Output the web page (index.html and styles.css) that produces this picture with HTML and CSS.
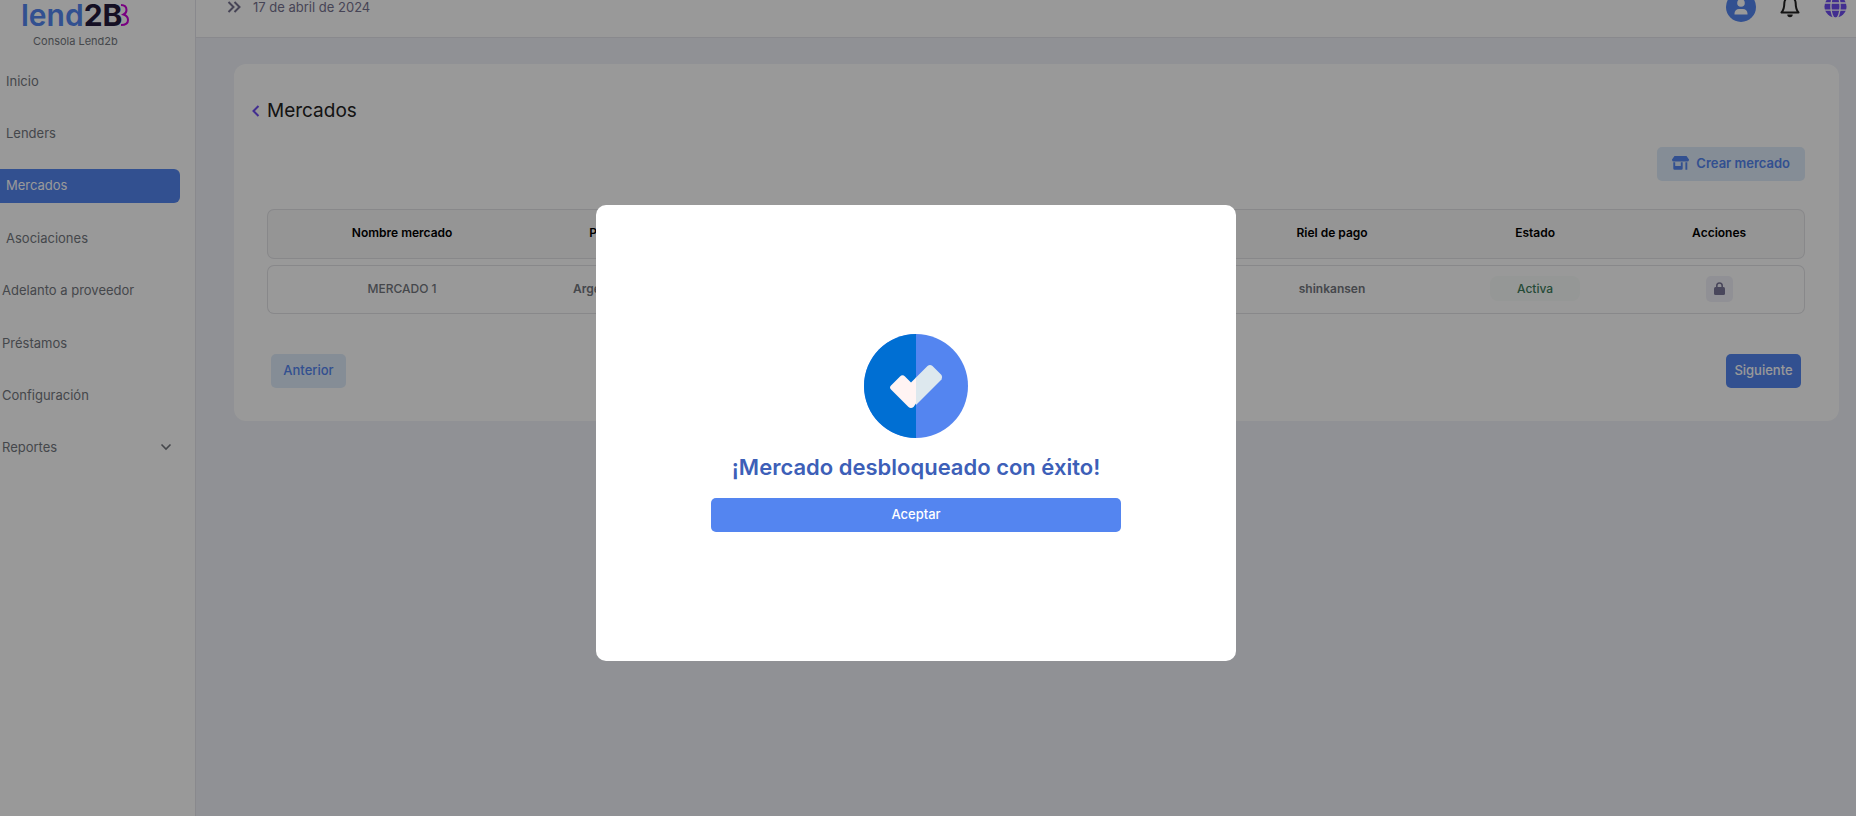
FILE: index.html
```
<!DOCTYPE html>
<html lang="es">
<head>
  <meta charset="UTF-8">
  <meta name="viewport" content="width=device-width, initial-scale=1.0">
  <title>Consola Lend2b</title>
  <link rel="stylesheet" href="styles.css">
</head>
<body>
  <div class="layout">
    <aside class="sidebar">
      <div class="brand">
        <div class="logo">
          <span>lend<span class="logo-dark">2B</span></span>
          <svg class="logo-edge" width="8" height="22" viewBox="0 0 8 22" fill="none" stroke="#c800d8" stroke-width="2"><path d="M0 1c4 0 5.500 2.500 5.500 5S4.500 9.500 2.500 10.500C5.500 11.500 7 13.500 7 16s-2 5-7 5"/></svg>
        </div>
        <div class="brand-name">Consola Lend2b</div>
      </div>
      <nav class="menu">
        <a href="#" class="menu-item">Inicio</a>
        <a href="#" class="menu-item">Lenders</a>
        <a href="#" class="menu-item active">Mercados</a>
        <a href="#" class="menu-item">Asociaciones</a>
        <a href="#" class="menu-item outer">Adelanto a proveedor</a>
        <a href="#" class="menu-item outer">Préstamos</a>
        <a href="#" class="menu-item outer">Configuración</a>
        <a href="#" class="menu-item outer">Reportes
          <svg width="12" height="8" viewBox="0 0 12 8" fill="none" stroke="currentColor" stroke-width="1.600"><path d="M1.500 1.500 6 6l4.500-4.500"/></svg>
        </a>
      </nav>
    </aside>

    <div class="content">
      <header class="topbar">
        <button class="icon-btn toggle" aria-label="Menú">
          <svg width="14" height="12" viewBox="0 0 14 12" fill="none" stroke="currentColor" stroke-width="2"><path d="M1.500 1 6.500 6l-5 5M7.500 1l5 5-5 5"/></svg>
        </button>
        <span class="date">17 de abril de 2024</span>
        <div class="topbar-icons">
          <button class="icon-btn avatar" aria-label="Usuario">
            <svg width="14" height="16" viewBox="0 0 14 16" fill="#fff"><circle cx="7" cy="4" r="3.800"/><path d="M.5 15.500v-1A4.500 4.500 0 0 1 5 10h4a4.500 4.500 0 0 1 4.500 4.500v1z"/></svg>
          </button>
          <button class="icon-btn bell" aria-label="Notificaciones">
            <svg width="20" height="24" viewBox="0 0 20 24"><path d="M10 2.500c-3.500 0-5.700 2.500-5.700 6 0 5-.8 6.700-2.800 9h17c-2-2.300-2.800-4-2.800-9 0-3.500-2.200-6-5.700-6z" fill="none" stroke="currentColor" stroke-width="2" stroke-linejoin="round"/><path d="M7.300 19.500h5.400a2.700 2.700 0 0 1-5.400 0z" fill="currentColor"/></svg>
          </button>
          <button class="icon-btn globe" aria-label="Idioma">
            <svg width="23" height="23" viewBox="0 0 24 24"><circle cx="12" cy="12" r="11.500" fill="currentColor"/><path d="M0 8.300h24M0 15.700h24" stroke="#fff" stroke-width="1.400"/><ellipse cx="12" cy="12" rx="4.800" ry="12.500" fill="none" stroke="#fff" stroke-width="1.400"/></svg>
          </button>
        </div>
      </header>

      <main class="card">
        <div class="card-title">
          <a href="#" class="back" aria-label="Volver">
            <svg width="8" height="12" viewBox="0 0 8 12" fill="none" stroke="currentColor" stroke-width="2"><path d="M6.500 1 1.500 6l5 5"/></svg>
          </a>
          <h1>Mercados</h1>
        </div>

        <div class="card-body">
          <div class="actions">
            <button class="btn btn-light btn-create">
              <svg width="17" height="14" viewBox="0 0 17 14" fill="currentColor"><path d="M2.500 0h12L17 3.500V4a1.800 1.800 0 0 1-1.800 1.500H1.800A1.800 1.800 0 0 1 0 4v-.5z"/><path d="M1.300 6.200h1.900V10h5.600V6.200h1.900v6.300a1.200 1.200 0 0 1-1.200 1.200h-7a1.200 1.200 0 0 1-1.200-1.200zM13.400 6.200h1.900v7.500h-1.900z"/></svg>
              Crear mercado
            </button>
          </div>

          <table class="markets">
            <thead>
              <tr>
                <th class="col-name">Nombre mercado</th>
                <th class="col-country">País</th>
                <th class="col-wide"></th>
                <th class="col-rail">Riel de pago</th>
                <th class="col-state">Estado</th>
                <th class="col-actions">Acciones</th>
              </tr>
            </thead>
            <tbody>
              <tr>
                <td class="name">MERCADO 1</td>
                <td>Argentina</td>
                <td></td>
                <td>shinkansen</td>
                <td><span class="badge">Activa</span></td>
                <td>
                  <button class="lock" aria-label="Bloquear mercado">
                    <svg width="11" height="13" viewBox="0 0 11 13"><path d="M2.800 6V3.700a2.700 2.700 0 0 1 5.400 0V6" fill="none" stroke="currentColor" stroke-width="1.600"/><rect y="5" width="11" height="8" rx="1.500" fill="currentColor"/></svg>
                  </button>
                </td>
              </tr>
            </tbody>
          </table>

          <div class="pagination">
            <button class="btn btn-light">Anterior</button>
            <button class="btn btn-primary">Siguiente</button>
          </div>
        </div>
      </main>
    </div>
  </div>

  <div class="overlay">
    <div class="modal" role="dialog" aria-labelledby="modalTitle">
      <svg width="104" height="104" viewBox="0 0 104 104">
        <circle cx="52" cy="52" r="52" fill="#5485f0"/>
        <path d="M52 0a52 52 0 0 0 0 104z" fill="#006fd3"/>
        <path d="M27 51.500 36 42.500Q38.500 40 41 42.500L47 48.500 52 43.500V69.500L49.500 73Q47 75 44.500 73L27 55.500Q25 53.500 27 51.500z" fill="#fff4f3"/>
        <path d="M52 43.500 63.500 32Q66 30 68.500 32L77.500 41Q79 43.500 77.500 45.500L52 71z" fill="#dde8ee"/>
      </svg>
      <h2 id="modalTitle">¡Mercado desbloqueado con éxito!</h2>
      <button class="btn btn-primary btn-accept">Aceptar</button>
    </div>
  </div>
</body>
</html>
```
FILE: styles.css
```
* {
  box-sizing: border-box;
}
body {
  margin: 0;
  font-family: Inter, "Liberation Sans", sans-serif;
  font-size: 13px;
  background-color: #f0f2f8;
  color: #73777e;
  overflow: hidden;
}
button {
  font-family: inherit;
  border: none;
  cursor: pointer;
}
svg {
  display: block;
  flex-shrink: 0;
}
.layout {
  display: flex;
  min-height: 100vh;
}

/* sidebar */
.sidebar {
  width: 196px;
  flex-shrink: 0;
  background: white;
  border-right: 1px solid #e4e5ec;
}
.brand {
  height: 64px;
  padding-left: 21px;
}
.logo {
  display: flex;
  align-items: center;
  font-size: 30px;
  line-height: 30px;
  font-weight: 600;
  color: #5485f0;
}
.logo-dark {
  color: #241a3d;
  font-weight: 700;
}
.logo-edge {
  margin-left: -1px;
}
.brand-name {
  padding-left: 12px;
  font-size: 11px;
  line-height: 22px;
}
.menu {
  display: grid;
  align-content: space-between;
  min-height: 401px;
  padding-right: 15px;
}
.menu-item {
  display: flex;
  align-items: center;
  justify-content: space-between;
  height: 34px;
  padding: 0 8px 1px 6px;
  color: inherit;
  text-decoration: none;
}
.menu-item.outer {
  padding-left: 2px;
}
.menu-item.active {
  background: #5485f0;
  color: white;
  border-radius: 0 6px 6px 0;
}

/* top bar */
.content {
  flex: 1;
  min-width: 0;
}
.topbar {
  display: flex;
  align-items: center;
  height: 62px;
  margin-top: -24px;
  padding: 0 9px 0 31px;
  background: white;
  border-bottom: 1px solid #e4e5ec;
  color: #76728f;
}
.icon-btn {
  display: flex;
  align-items: center;
  justify-content: center;
  padding: 0;
  background: none;
  color: inherit;
}
.date {
  margin-left: 12px;
}
.topbar-icons {
  display: flex;
  align-items: center;
  gap: 24px;
  margin-left: auto;
}
.avatar {
  width: 30px;
  height: 30px;
  border-radius: 50%;
  background: #5485f0;
}
.bell {
  color: #222;
}
.globe {
  color: #6f4df0;
}

/* card */
.card {
  margin: 26px 17px 0 38px;
  padding: 33px 34px 33px 18px;
  background: white;
  border-radius: 12px;
}
.card-title {
  display: flex;
  align-items: center;
  gap: 7px;
}
.back {
  color: #6f4df0;
}
h1 {
  margin: 0;
  font-size: 19px;
  line-height: 28px;
  font-weight: 400;
  color: #222;
}
.card-body {
  padding-left: 15px;
}
.actions {
  display: flex;
  justify-content: flex-end;
  margin: 22px 0;
}
.btn {
  height: 34px;
  padding: 0 0 2px;
  min-width: 75px;
  border-radius: 5px;
  font-size: 13px;
  font-weight: 500;
}
.btn-light {
  background: #deecfa;
  color: #5485f0;
}
.btn-primary {
  background: #5485f0;
  color: white;
}
.btn-create {
  display: flex;
  align-items: center;
  gap: 7px;
  padding: 0 15px 2px;
  font-weight: 600;
}

/* table */
.markets {
  width: 100%;
  table-layout: fixed;
  border-collapse: separate;
  border-spacing: 0 6px;
}
th, td {
  height: 49px;
  padding: 0 0 2px;
  border: solid #e3e3e6;
  border-width: 1px 0;
  text-align: center;
  font-size: 12px;
  font-weight: 600;
}
th {
  height: 50px;
  padding-bottom: 4px;
  background: #f8f8f9;
  color: black;
}
th:first-child, td:first-child {
  border-left-width: 1px;
  border-radius: 7px 0 0 7px;
}
th:last-child, td:last-child {
  border-right-width: 1px;
  border-radius: 0 7px 7px 0;
}
.name {
  font-weight: 500;
}
.col-name { width: 17.5%; }
.col-country { width: 8.5%; }
.col-wide { width: 36.5%; }
.col-rail { width: 13.5%; }
.col-state { width: 12.9%; }
.col-actions { width: 11.1%; }
.badge {
  display: inline-block;
  width: 90px;
  line-height: 25px;
  border-radius: 8px;
  background: #f9fcfa;
  color: #3d7d5c;
  font-weight: 500;
}
.lock {
  display: flex;
  align-items: center;
  justify-content: center;
  width: 27px;
  height: 26px;
  margin: 0 auto;
  padding: 0;
  border-radius: 5px;
  background: #f1f1f8;
  color: #7b7799;
}
.pagination {
  display: flex;
  justify-content: space-between;
  margin-top: 34px;
  padding: 0 4px;
}

/* modal */
.overlay {
  position: fixed;
  inset: 0;
  display: flex;
  align-items: center;
  justify-content: center;
  padding: 49px 24px 0 0;
  background: rgba(0, 0, 0, 0.4);
}
.modal {
  display: flex;
  flex-direction: column;
  align-items: center;
  width: 640px;
  padding: 129px 0;
  background: white;
  border-radius: 10px;
}
.modal h2 {
  margin: 14px 0 16px;
  font-size: 22px;
  line-height: 30px;
  font-weight: 600;
  color: #3d5fb8;
}
.btn-accept {
  width: 410px;
}
```
